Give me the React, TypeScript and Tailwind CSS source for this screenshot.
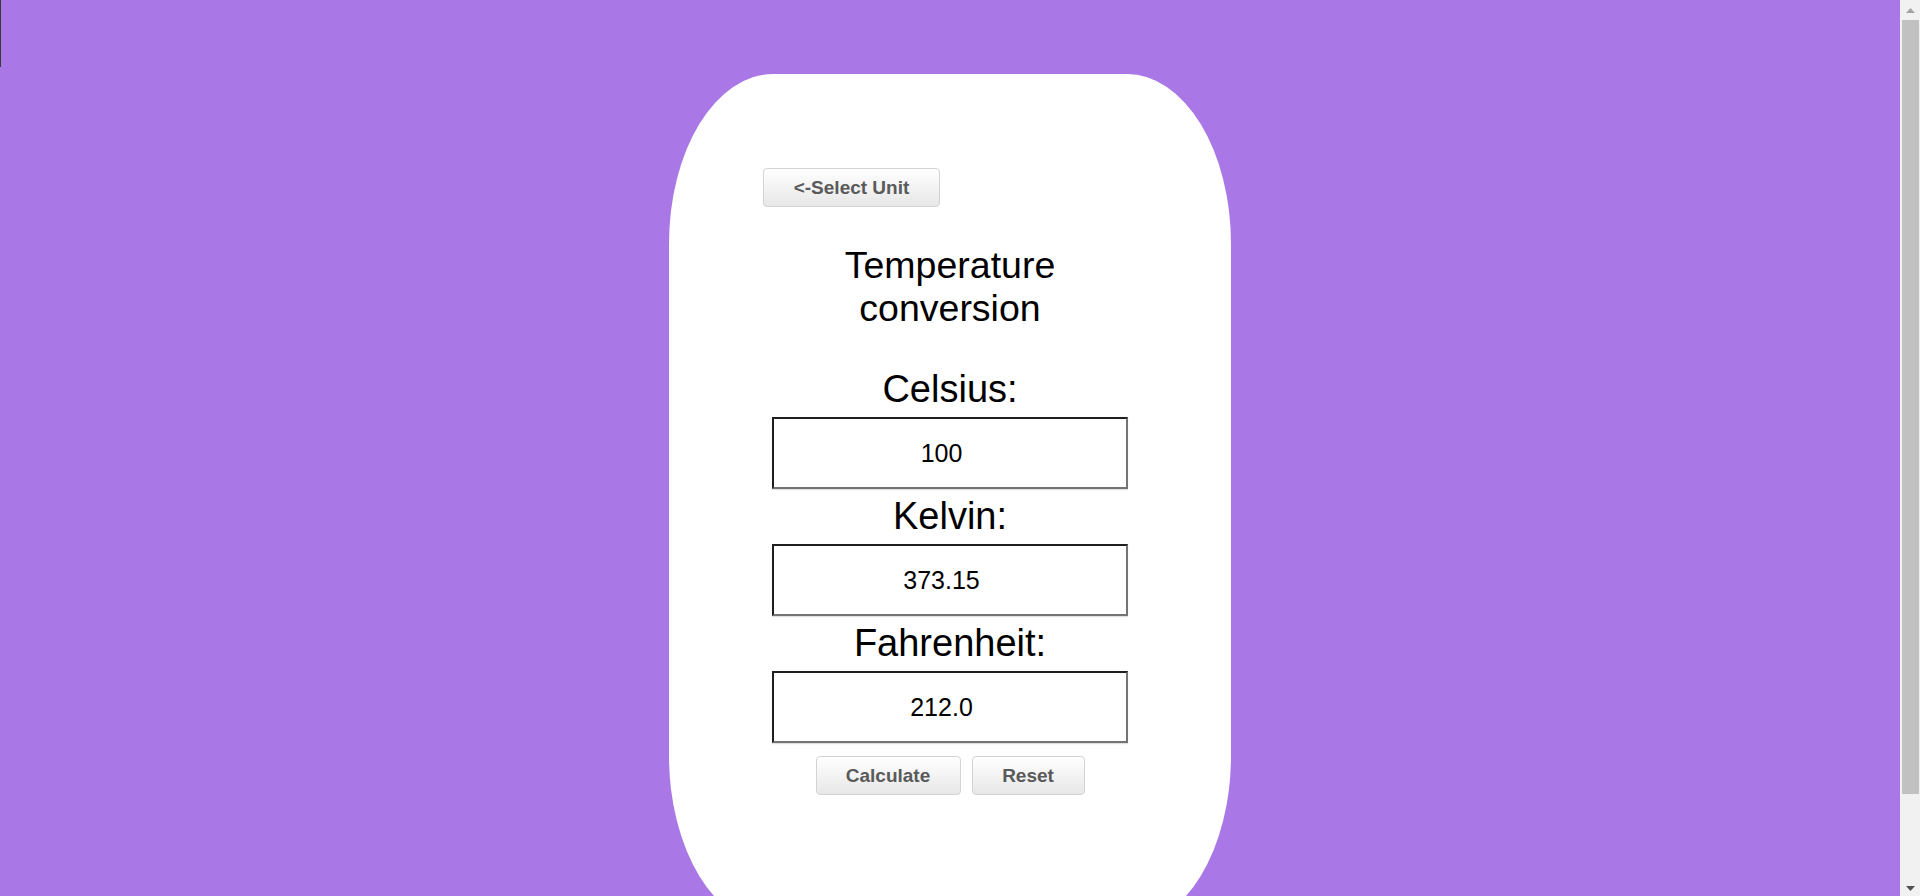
import React, { useState } from 'react';

const font = { fontFamily: '"Liberation Sans", Arial, Helvetica, sans-serif' };

const fields = [
  { label: 'Celsius:', key: 'c' },
  { label: 'Kelvin:', key: 'k' },
  { label: 'Fahrenheit:', key: 'f' },
] as const;

const btn =
  'h-[39px] rounded-[4px] border border-[#d3d3d3] bg-linear-to-b from-white to-[#e7e7e7] text-[19px] font-bold text-[#5a5a5a] leading-none';

export default function App() {
  const [vals, setVals] = useState({ c: '100', k: '373.15', f: '212.0' });

  const calculate = () => {
    const c = parseFloat(vals.c);
    if (isNaN(c)) return;
    setVals({ c: vals.c, k: (c + 273.15).toFixed(2).replace(/\.?0+$/, ''), f: (c * 9 / 5 + 32).toFixed(1) });
  };

  return (
    <div className="flex h-screen overflow-hidden" style={font}>
      <main className="relative flex-1 bg-[#a978e6] pt-[74px]">
        {/* stray edge line top-left */}
        <div className="absolute left-0 top-0 w-px h-[67px] bg-[#3a3a3a]" />

        <div className="mx-auto w-[562px] h-[852px] bg-white rounded-[104px/170px] flex flex-col items-center pt-[94px]">
          <button className={`${btn} self-start ml-[94px] w-[177px]`}>&lt;-Select Unit</button>

          <h2 className="mt-[37px] text-[37.5px] leading-[normal] text-black text-center font-normal">
            Temperature
            <br />
            conversion
          </h2>

          <div className="mt-[38px] flex flex-col items-center gap-[6px]">
            {fields.map((f) => (
              <React.Fragment key={f.key}>
                <label className="text-[38px] leading-[normal] text-black">{f.label}</label>
                <input
                  value={vals[f.key]}
                  onChange={(e) => setVals({ ...vals, [f.key]: e.target.value })}
                  className="w-[356px] h-[72px] pl-0 pr-[17px] bg-white text-center text-[25px] text-black border-2 border-t-[#1f1f1f] border-l-[#1f1f1f] border-b-[#747474] border-r-[#747474] shadow-[0_1px_1px_rgba(0,0,0,0.12)] outline-none"
                  style={font}
                />
              </React.Fragment>
            ))}
          </div>

          <div className="mt-[13px] flex gap-[11px]">
            <button onClick={calculate} className={`${btn} w-[145px]`}>Calculate</button>
            <button onClick={() => setVals({ c: '', k: '', f: '' })} className={`${btn} w-[113px]`}>Reset</button>
          </div>
        </div>
      </main>

      {/* scrollbar */}
      <div className="w-[20px] bg-[#f1f1f1] flex flex-col items-stretch">
        <div className="h-[20px] flex items-center justify-center">
          <svg width="9" height="5" viewBox="0 0 9 5"><path d="M4.5 0L9 5H0z" fill="#a3a3a3" /></svg>
        </div>
        <div className="h-[774px] ml-[2px] mr-[1px] bg-[#c1c1c1]" />
        <div className="flex-1 flex items-end justify-center pb-[5px]">
          <svg width="9" height="5" viewBox="0 0 9 5"><path d="M0 0H9L4.5 5z" fill="#505050" /></svg>
        </div>
      </div>
    </div>
  );
}
